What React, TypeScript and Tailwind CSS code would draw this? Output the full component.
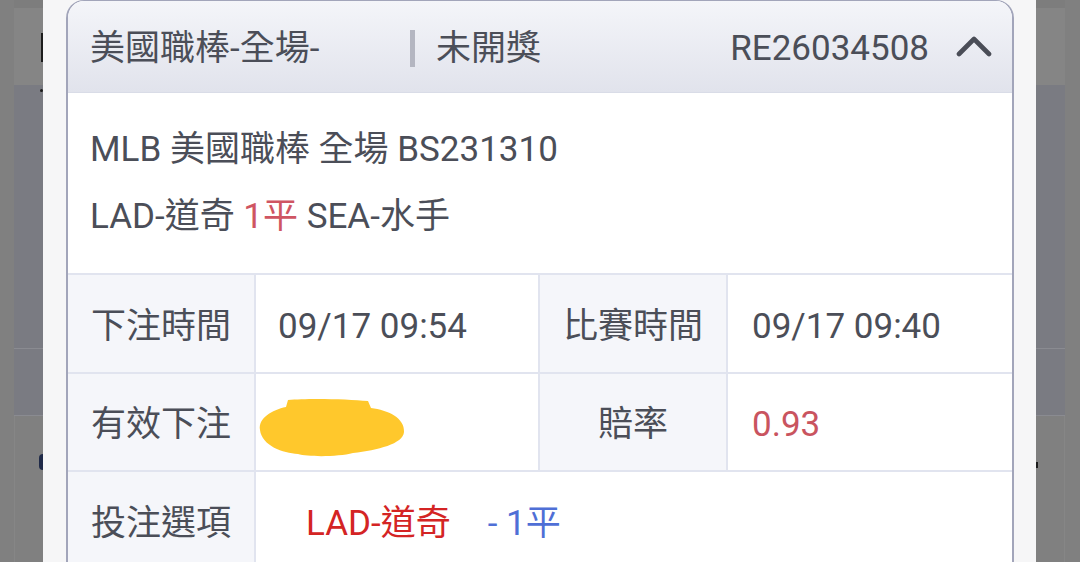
import React from 'react';

const font = "font-['Roboto','Noto_Sans_CJK_TC',sans-serif]";

function Backdrop({ side }: { side: 'left' | 'right' }) {
  const isLeft = side === 'left';
  return (
    <div className={`flex h-full shrink-0 ${isLeft ? 'w-[43px]' : 'w-[44px] flex-row-reverse'} bg-[#808080]`}>
      <div className={`h-full ${isLeft ? 'w-[14px]' : 'w-[15px]'}`} />
      <div className="flex h-full w-[29px] flex-col">
        <div className="h-[8px] bg-[#7d7d7d]" />
        <div className={`flex h-[77px] bg-[#858585] ${isLeft ? 'justify-end' : ''}`}>
          {isLeft && <div className="mt-[25px] h-[29px] w-[2px] bg-[#1c1c1c]" />}
        </div>
        <div className={`flex h-[263px] bg-[#7a7b82] ${isLeft ? 'justify-end' : ''}`}>
          {isLeft && <div className="mt-[4px] h-[3px] w-[3px] rounded-full bg-[#1c1c1c]" />}
        </div>
        <div className="h-px bg-[#8a8b91]" />
        <div className="h-[66px] bg-[#7a7b82]" />
        <div className="h-px bg-[#8a8b91]" />
        <div className={`flex flex-1 bg-[#808080] ${isLeft ? 'justify-end border-l border-[#868686]' : 'border-r border-[#868686]'}`}>
          {isLeft ? (
            <div className="mt-[38px] h-[16px] w-[4px] rounded-l-full bg-[#1f2a48]" />
          ) : (
            <div className="mt-[46px] h-[6px] w-[2px] bg-[#1c1c1c]" />
          )}
        </div>
      </div>
    </div>
  );
}

function Chevron() {
  return (
    <svg width="36" height="24" viewBox="0 0 36 24" fill="none" className="shrink-0">
      <path d="M3 20 L18 5 L33 20" stroke="#4a4d57" strokeWidth="4.6" strokeLinecap="round" strokeLinejoin="round" />
    </svg>
  );
}

function Blob() {
  return (
    <svg width="148" height="60" viewBox="0 0 148 60" className="shrink-0">
      <path
        d="M2 32 C0 20 14 12 28 9 L30 2 C50 0 90 1 110 3 L113 10 C130 12 147 20 146 34 C145 46 120 52 95 55 C80 59 50 59 40 56 C25 55 4 48 2 32 Z"
        fill="#ffc82c"
      />
    </svg>
  );
}

const labelCell = 'flex items-center justify-center pt-[5px] bg-[#f5f6fa] border-r-2 border-[#e1e4ef]';

export default function App() {
  return (
    <div className={`flex h-[562px] w-[1080px] overflow-hidden ${font} text-[35px] leading-none text-[#4b4e58]`}>
      <Backdrop side="left" />

      {/* modal panel */}
      <div className="flex h-full flex-1 bg-[#f6f6f7] pl-[23px] pr-[22px]">
        <div className="flex h-full flex-1 flex-col overflow-hidden rounded-t-[18px] border-x-2 border-t border-[#a2a5ba] bg-white">
          {/* header */}
          <div className="flex h-[92px] shrink-0 items-center border-b border-[#d9dce7] bg-linear-to-b from-[#f4f5f9] to-[#e1e3ec] pl-[22px] pr-[20px] pt-[4px]">
            <span className="w-[320px]">美國職棒-全場-</span>
            <div className="h-[37px] w-[5px] bg-[#b4b6c1]" />
            <span className="ml-[21px]">未開獎</span>
            <span className="ml-auto">RE26034508</span>
            <div className="ml-[27px] mt-[-6px]">
              <Chevron />
            </div>
          </div>

          {/* summary */}
          <div className="flex flex-col px-[22px] py-[23px]">
            <div className="flex h-[67px] items-center">MLB 美國職棒 全場 BS231310</div>
            <div className="flex h-[67px] items-center">
              LAD-道奇&nbsp;<span className="text-[#cf5562]">1平</span>&nbsp;SEA-水手
            </div>
          </div>

          {/* details table */}
          <div className="grid grid-cols-[188px_284px_188px_1fr] border-t-2 border-[#e1e4ef]">
            <div className={`${labelCell} h-[99px] border-b-2`}>下注時間</div>
            <div className="flex h-[99px] items-center border-b-2 border-r-2 border-[#e1e4ef] pl-[22px] pt-[5px]">09/17 09:54</div>
            <div className={`${labelCell} h-[99px] border-b-2`}>比賽時間</div>
            <div className="flex h-[99px] items-center border-b-2 border-[#e1e4ef] pl-[24px] pt-[5px]">09/17 09:40</div>

            <div className={`${labelCell} h-[98px] border-b-2`}>有效下注</div>
            <div className="flex h-[98px] items-center border-b-2 border-r-2 border-[#e1e4ef] pl-[2px] pt-[12px]">
              <Blob />
            </div>
            <div className={`${labelCell} h-[98px] border-b-2`}>賠率</div>
            <div className="flex h-[98px] items-center border-b-2 border-[#e1e4ef] pl-[24px] pt-[5px] text-[#c9545f]">0.93</div>

            <div className={`${labelCell} h-[98px]`}>投注選項</div>
            <div className="col-span-3 flex h-[98px] items-center pl-[50px] pt-[5px]">
              <span className="text-[#d42424]">LAD-道奇</span>
              <span className="ml-[37px] text-[#4f6fd6]">- 1平</span>
            </div>
          </div>
        </div>
      </div>

      <Backdrop side="right" />
    </div>
  );
}
